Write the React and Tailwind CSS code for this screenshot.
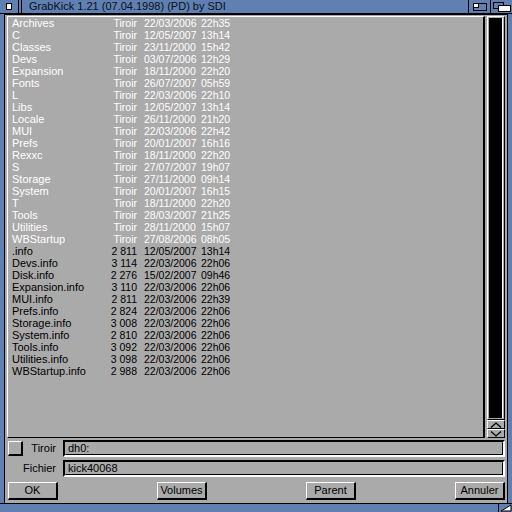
import React from "react";

// Directory listing: [name, size or "Tiroir", date, time]
const dirs = [
  ["Archives", "22/03/2006", "22h35"],
  ["C", "12/05/2007", "13h14"],
  ["Classes", "23/11/2000", "15h42"],
  ["Devs", "03/07/2006", "12h29"],
  ["Expansion", "18/11/2000", "22h20"],
  ["Fonts", "26/07/2007", "05h59"],
  ["L", "22/03/2006", "22h10"],
  ["Libs", "12/05/2007", "13h14"],
  ["Locale", "26/11/2000", "21h20"],
  ["MUI", "22/03/2006", "22h42"],
  ["Prefs", "20/01/2007", "16h16"],
  ["Rexxc", "18/11/2000", "22h20"],
  ["S", "27/07/2007", "19h07"],
  ["Storage", "27/11/2000", "09h14"],
  ["System", "20/01/2007", "16h15"],
  ["T", "18/11/2000", "22h20"],
  ["Tools", "28/03/2007", "21h25"],
  ["Utilities", "28/11/2000", "15h07"],
  ["WBStartup", "27/08/2006", "08h05"],
];

const files = [
  [".info", "2 811", "12/05/2007", "13h14"],
  ["Devs.info", "3 114", "22/03/2006", "22h06"],
  ["Disk.info", "2 276", "15/02/2007", "09h46"],
  ["Expansion.info", "3 110", "22/03/2006", "22h06"],
  ["MUI.info", "2 811", "22/03/2006", "22h39"],
  ["Prefs.info", "2 824", "22/03/2006", "22h06"],
  ["Storage.info", "3 008", "22/03/2006", "22h06"],
  ["System.info", "2 810", "22/03/2006", "22h06"],
  ["Tools.info", "3 092", "22/03/2006", "22h06"],
  ["Utilities.info", "3 098", "22/03/2006", "22h06"],
  ["WBStartup.info", "2 988", "22/03/2006", "22h06"],
];

function Row({ name, size, date, time, dir }) {
  return (
    <div
      className={`flex h-[12px] items-center leading-[12px] whitespace-nowrap ${
        dir ? "text-white" : "text-black"
      }`}
    >
      <span className="w-[101px] shrink-0">{name}</span>
      <span className="w-[24px] shrink-0 flex justify-end text-[10.5px]">{size}</span>
      <span className="w-[64px] shrink-0 pl-[7px] text-[10.5px]">{date}</span>
      <span className="text-[10.5px]">{time}</span>
    </div>
  );
}

function Button({ children }) {
  return (
    <div className="w-[50px] h-[18px] flex items-center justify-center border border-t-white border-l-white border-r-black border-b-black border-r-2 border-b-2 text-black">
      {children}
    </div>
  );
}

function Field({ value }) {
  return (
    <div className="flex-1 h-[17px] border-2 border-t-black border-l-black border-r-white border-b-white flex items-center">
      <div className="flex-1 h-full border border-t-[#aaaaaa] border-l-[#aaaaaa] border-r-black border-b-black pl-[2px] flex items-center text-black">
        {value}
      </div>
    </div>
  );
}

export default function App() {
  return (
    <div
      className="w-[512px] h-[512px] bg-[#5f80b0] flex flex-col overflow-hidden text-[11px]"
      style={{ fontFamily: '"Liberation Sans", Arial, sans-serif' }}
    >
      {/* title bar */}
      <div className="h-[14px] flex items-stretch border-b border-black">
        <div className="w-[19px] flex items-center justify-center border-r border-black">
          <div className="w-[6px] h-[7px] bg-white border border-black" />
        </div>
        <div className="w-[3px] border-r border-black" />
        <div className="flex-1 pl-[7px] flex items-center text-[#0a0f20] leading-none">
          GrabKick 1.21 (07.04.1998) (PD) by SDI
        </div>
        <div className="w-[22px] border-l border-black flex items-center justify-center">
          <div className="w-[14px] h-[8px] border border-black bg-[#5f80b0] relative">
            <div className="absolute left-0 top-0 w-[5px] h-[4px] bg-white border-r border-b border-black" />
          </div>
        </div>
        <div className="w-[22px] border-l border-black flex items-center justify-center">
          <svg width="18" height="10" viewBox="0 0 18 10">
            <rect x="0.5" y="0.5" width="10" height="6" fill="#5f80b0" stroke="#000" />
            <rect x="5.5" y="3.5" width="12" height="6" fill="#fff" stroke="#000" />
          </svg>
        </div>
      </div>

      {/* body */}
      <div className="flex-1 flex mx-[4px] bg-[#aaaaaa] border-l border-r border-t border-black min-h-0">
        <div className="flex-1 flex flex-col pt-[1px] px-[2px] pb-[3px] min-h-0">
          <div className="flex-1 flex gap-[2px] min-h-0">
            {/* list */}
            <div className="flex-1 border border-t-white border-l-white border-r-black border-b-black border-r-2 pl-[4px] overflow-hidden">
              {dirs.map(([n, d, t]) => (
                <Row key={n} name={n} size="Tiroir" date={d} time={t} dir />
              ))}
              {files.map(([n, s, d, t]) => (
                <Row key={n} name={n} size={s} date={d} time={t} />
              ))}
            </div>
            {/* scrollbar */}
            <div className="w-[18px] flex flex-col">
              <div className="flex-1 border border-t-white border-l-white border-r-black border-b-black p-[1px]">
                <div className="w-full h-full bg-black border-r border-white" />
              </div>
              <div className="h-[9px] border border-t-white border-l-white border-r-black border-b-black flex items-center justify-center">
                <svg width="12" height="6" viewBox="0 0 12 6">
                  <polyline points="1,5.5 6,1 11,5.5" fill="none" stroke="#000" strokeWidth="1.3" />
                </svg>
              </div>
              <div className="h-[9px] border border-t-white border-l-white border-r-black border-b-black flex items-center justify-center">
                <svg width="12" height="6" viewBox="0 0 12 6">
                  <polyline points="1,0.5 6,5 11,0.5" fill="none" stroke="#000" strokeWidth="1.3" />
                </svg>
              </div>
            </div>
          </div>

          {/* Tiroir row */}
          <div className="flex items-center mt-[2px] h-[17px]">
            <div className="w-[15px] h-[15px] ml-[1px] border border-t-white border-l-white border-r-black border-b-black border-r-2 border-b-2" />
            <div className="w-[40px] text-right pr-[7px] text-black">Tiroir</div>
            <Field value="dh0:" />
          </div>
          {/* Fichier row */}
          <div className="flex items-center mt-[3px] h-[17px]">
            <div className="w-[56px] text-right pr-[7px] text-black">Fichier</div>
            <Field value="kick40068" />
          </div>
          {/* buttons */}
          <div className="flex justify-between mt-[5px] pl-[1px]">
            <Button>OK</Button>
            <Button>Volumes</Button>
            <Button>Parent</Button>
            <Button>Annuler</Button>
          </div>
        </div>
      </div>

      {/* bottom border */}
      <div className="h-[9px] flex justify-end border-t border-black">
        <div className="w-[14px] h-full flex items-end justify-end border-l border-black">
          <svg width="12" height="8" viewBox="0 0 12 8">
            <polygon points="11,1 11,7 1,7" fill="#fff" stroke="#000" strokeWidth="1" />
          </svg>
        </div>
      </div>
    </div>
  );
}
